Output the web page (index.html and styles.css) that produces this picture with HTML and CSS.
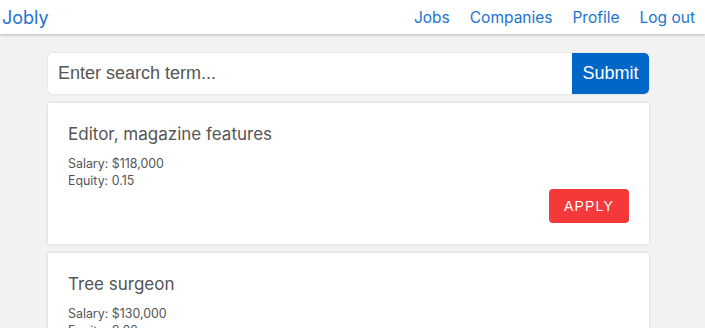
FILE: index.html
```html
<!DOCTYPE html>
<html lang="en">
<head>
  <meta charset="UTF-8">
  <meta name="viewport" content="width=device-width, initial-scale=1.0">
  <title>Jobly</title>
  <link rel="stylesheet" href="styles.css">
</head>
<body>
  <nav class="navbar">
    <a class="brand" href="#">Jobly</a>
    <div class="nav-links">
      <a href="#">Jobs</a>
      <a href="#">Companies</a>
      <a href="#">Profile</a>
      <a href="#">Log out</a>
    </div>
  </nav>

  <main class="container">
    <form class="search-form">
      <input class="search-input" type="text" placeholder="Enter search term...">
      <button class="search-btn" type="button">Submit</button>
    </form>

    <div class="job-card">
      <h6 class="job-title">Editor, magazine features</h6>
      <div class="job-info">Salary: $118,000</div>
      <div class="job-info">Equity: 0.15</div>
      <div class="card-actions">
        <button class="apply-btn" type="button">Apply</button>
      </div>
    </div>

    <div class="job-card">
      <h6 class="job-title">Tree surgeon</h6>
      <div class="job-info">Salary: $130,000</div>
      <div class="job-info">Equity: 0.02</div>
      <div class="card-actions">
        <button class="apply-btn" type="button">Apply</button>
      </div>
    </div>
  </main>
</body>
</html>
```

FILE: styles.css
```css
body {
  margin: 0;
  padding: 0;
  background-color: #f2f2f2;
  font-family: Inter, "Liberation Sans", Arial, sans-serif;
}

a {
  color: inherit;
  text-decoration: none;
}

.navbar {
  display: flex;
  justify-content: space-between;
  align-items: center;
  height: 34px;
  padding: 0 10px 0 2px;
  background-color: #fff;
  color: #2274cc;
  box-shadow: 0 1px 3px rgba(0, 0, 0, 0.25);
}

.brand {
  font-size: 18px;
}

.nav-links {
  display: flex;
  gap: 20px;
  font-size: 15.5px;
}

.container {
  width: 601px;
  margin: 19px 0 0 48px;
}

.search-form {
  display: flex;
  height: 41px;
  margin-bottom: 9px;
  border-radius: 5px;
  box-shadow: 0 0 2px rgba(0, 0, 0, 0.15);
}

.search-input {
  flex: 1;
  border: none;
  border-radius: 5px 0 0 5px;
  padding: 0 10px;
  font-family: "Liberation Sans", Arial, sans-serif;
  font-size: 18px;
  color: #333;
  background: #fff;
  outline: none;
}

.search-input::placeholder {
  color: #555;
}

.search-btn {
  width: 77px;
  border: none;
  border-radius: 0 5px 5px 0;
  background-color: #0066c8;
  color: #fff;
  font-family: "Liberation Sans", Arial, sans-serif;
  font-size: 18px;
  cursor: pointer;
}

.job-card {
  background-color: #fff;
  padding: 20px 20px 21px;
  margin-bottom: 9px;
  box-shadow: 0 0 3px rgba(0, 0, 0, 0.15);
  color: #555;
}

.job-title {
  margin: 0 0 10px;
  font-size: 17px;
  font-weight: 400;
  line-height: 22px;
}

.job-info {
  font-size: 12.4px;
  line-height: 17px;
}

.card-actions {
  display: flex;
  justify-content: flex-end;
}

.apply-btn {
  width: 80px;
  height: 34px;
  border: none;
  border-radius: 4px;
  background-color: #f5383a;
  color: #fff;
  font-family: "Liberation Sans", Arial, sans-serif;
  font-size: 14px;
  letter-spacing: 1.2px;
  text-transform: uppercase;
  cursor: pointer;
}
```
